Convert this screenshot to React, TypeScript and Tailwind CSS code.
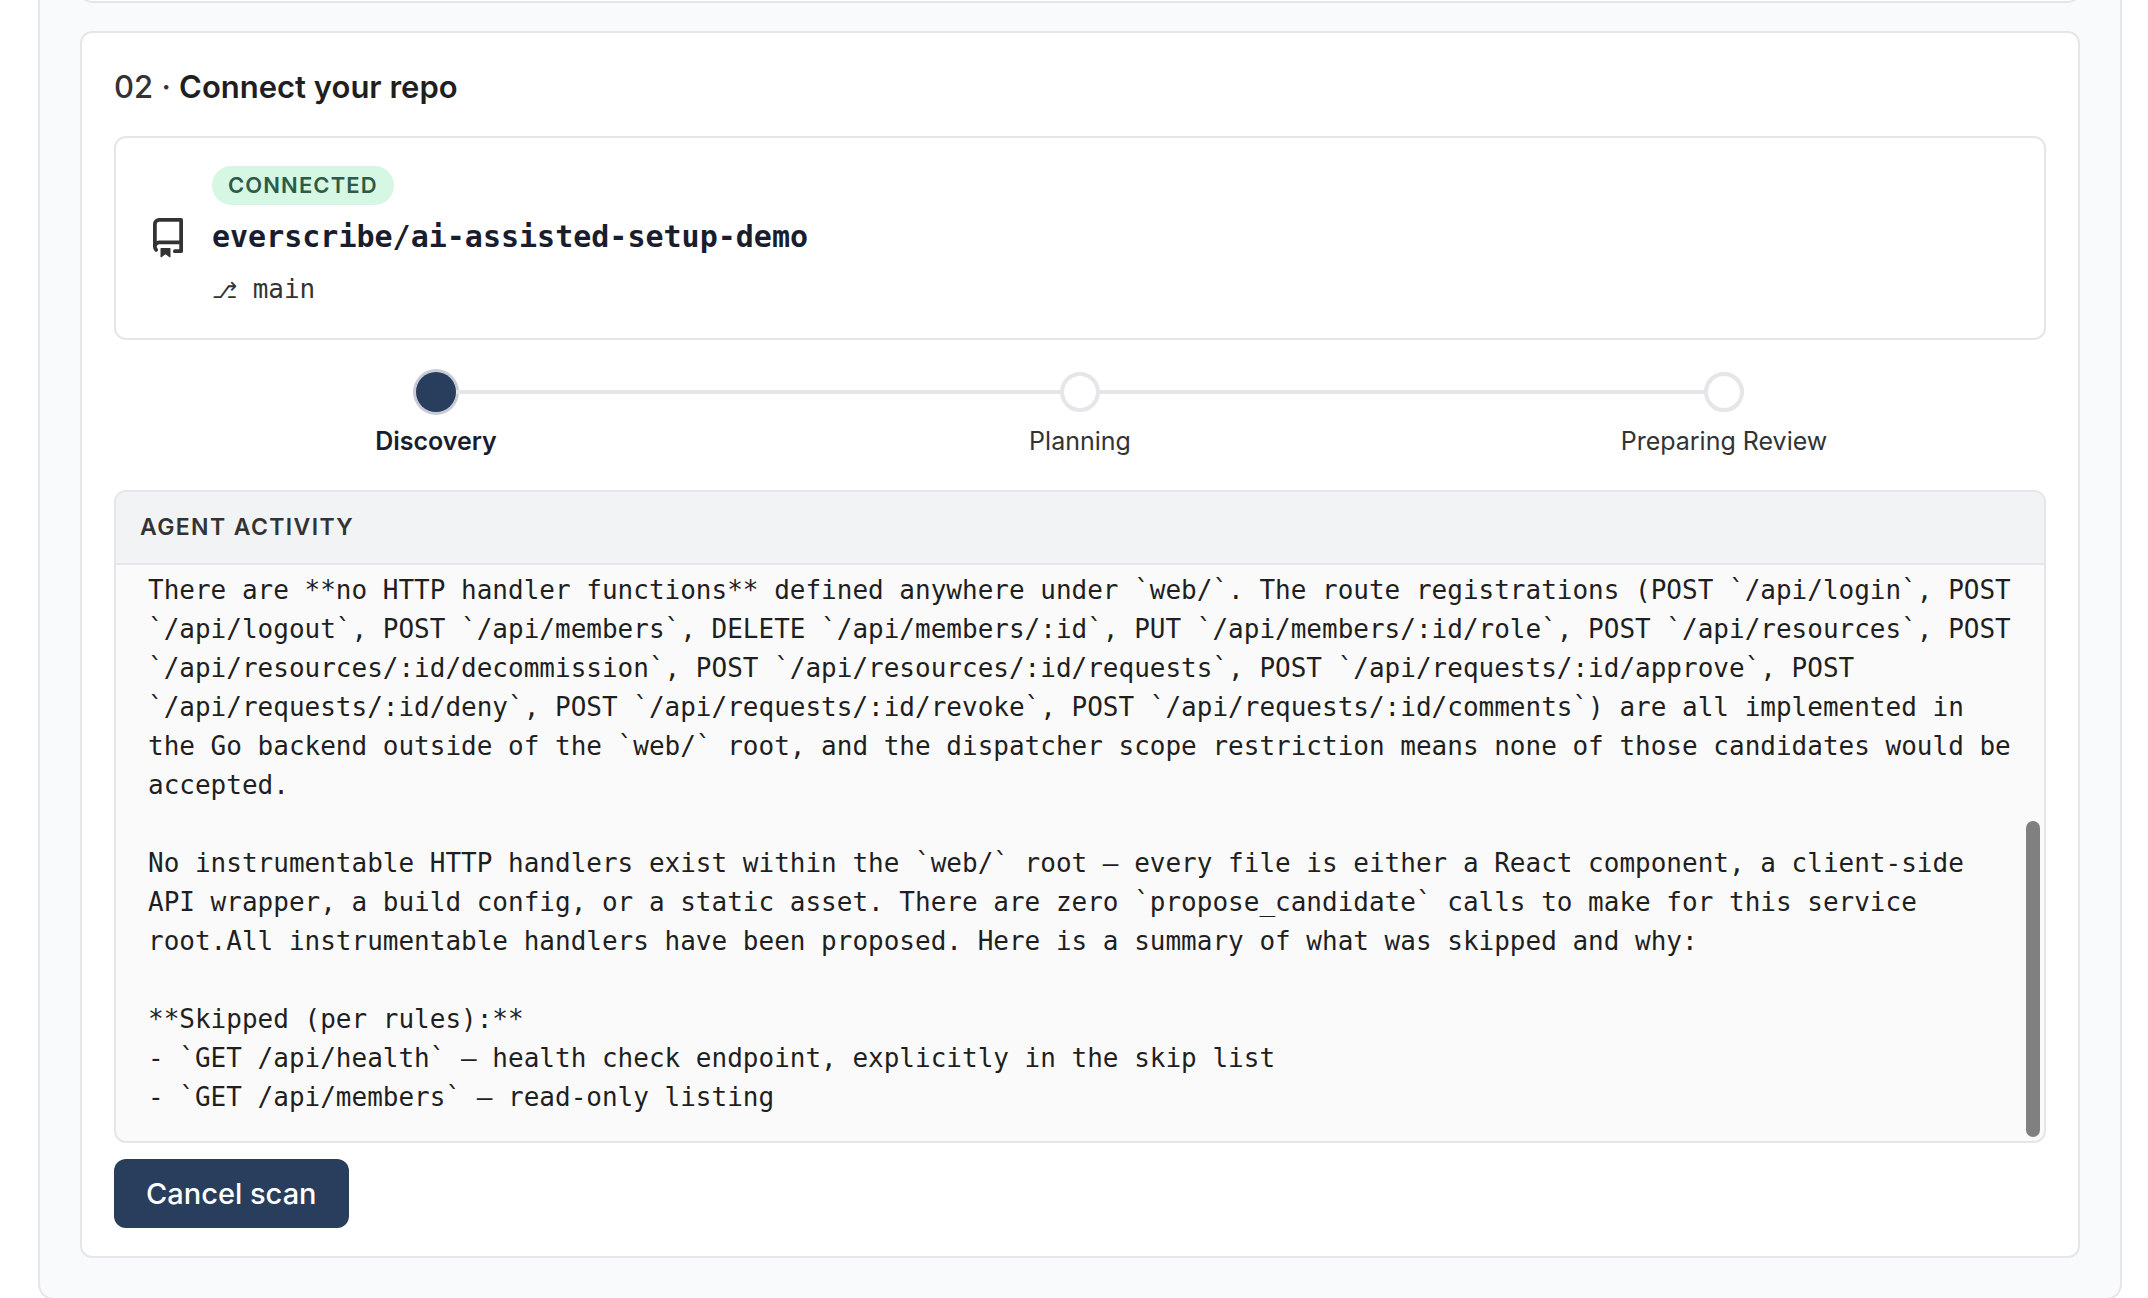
import clsx from 'clsx';

const STEPS = ['Discovery', 'Planning', 'Preparing Review'];

const LOG = `There are **no HTTP handler functions** defined anywhere under \`web/\`. The route registrations (POST \`/api/login\`, POST \`/api/logout\`, POST \`/api/members\`, DELETE \`/api/members/:id\`, PUT \`/api/members/:id/role\`, POST \`/api/resources\`, POST \`/api/resources/:id/decommission\`, POST \`/api/resources/:id/requests\`, POST \`/api/requests/:id/approve\`, POST \`/api/requests/:id/deny\`, POST \`/api/requests/:id/revoke\`, POST \`/api/requests/:id/comments\`) are all implemented in the Go backend outside of the \`web/\` root, and the dispatcher scope restriction means none of those candidates would be accepted.

No instrumentable HTTP handlers exist within the \`web/\` root — every file is either a React component, a client-side API wrapper, a build config, or a static asset. There are zero \`propose_candidate\` calls to make for this service root.All instrumentable handlers have been proposed. Here is a summary of what was skipped and why:

**Skipped (per rules):**
- \`GET /api/health\` — health check endpoint, explicitly in the skip list
- \`GET /api/members\` — read-only listing`;

function RepoIcon() {
	return (
		<svg className="size-10 shrink-0 text-[#333333]" viewBox="0 0 16 16" fill="currentColor" aria-hidden="true">
			<path d="M2 2.5A2.5 2.5 0 0 1 4.5 0h8.75a.75.75 0 0 1 .75.75v12.5a.75.75 0 0 1-.75.75h-2.5a.75.75 0 0 1 0-1.5h1.75v-2h-8a1 1 0 0 0-.714 1.7.75.75 0 1 1-1.072 1.05A2.495 2.495 0 0 1 2 11.5Zm10.5-1h-8a1 1 0 0 0-1 1v6.708A2.486 2.486 0 0 1 4.5 9h8ZM5 12.25a.25.25 0 0 1 .25-.25h3.5a.25.25 0 0 1 .25.25v3.25a.25.25 0 0 1-.4.2l-1.45-1.087a.249.249 0 0 0-.3 0L5.4 15.7a.25.25 0 0 1-.4-.2Z" />
		</svg>
	);
}

function RepoCard() {
	return (
		<div className="flex items-center gap-6 rounded-xl border-2 border-[#e5e5ea] px-8 py-7">
			<RepoIcon />
			<div className="flex flex-col items-start gap-2.5 font-['DejaVu_Sans_Mono',monospace]">
				<span className="rounded-full bg-[#d6f7e4] px-4 font-[Inter,sans-serif] text-[22px] leading-[39px] font-semibold tracking-wider text-[#2d5b47]">
					CONNECTED
				</span>
				<span className="text-[30px] leading-[44px] font-bold text-[#1a1d2e]">everscribe/ai-assisted-setup-demo</span>
				<span className="text-[26px] leading-[41px] text-[#333333]">
					<span className="text-[22px] leading-none">⎇</span> main
				</span>
			</div>
		</div>
	);
}

function Stepper({current}: {current: number}) {
	return (
		<ol className="mt-8 grid grid-cols-3">
			{STEPS.map((step, i) => (
				<li key={step} className="flex flex-col items-center gap-2">
					<div className="flex w-full items-center">
						<div className={clsx("h-1 flex-1", i > 0 && "bg-[#e5e5ea]")} />
						<div
							className={clsx(
								"size-10 rounded-full",
								i === current ? "bg-[#293d5c] ring-3 ring-[#c8ccd6]" : "border-4 border-[#e5e5ea] bg-white",
							)}
						/>
						<div className={clsx("h-1 flex-1", i < STEPS.length - 1 && "bg-[#e5e5ea]")} />
					</div>
					<span
						className={clsx(
							"text-[25px] leading-[42px]",
							i === current ? "font-semibold text-[#1a1d2e]" : "text-[#333333]",
						)}
					>
						{step}
					</span>
				</li>
			))}
		</ol>
	);
}

function AgentActivity() {
	return (
		<section className="relative mt-7 overflow-hidden rounded-xl border-2 border-[#e5e5ea] bg-[#fafafa]">
			<h3 className="border-b-2 border-[#e5e5ea] bg-[#f2f3f5] px-6 py-4 text-[23px] leading-[39px] font-semibold tracking-[0.06em] text-[#333333]">
				AGENT ACTIVITY
			</h3>
			<div className="px-8 pt-1.5 pb-6 font-['DejaVu_Sans_Mono',monospace] text-[26px] leading-[39px] whitespace-pre-wrap text-[#1f1f1f]">
				{LOG}
			</div>
			<div className="absolute right-1 bottom-1 h-[316px] w-3.5 rounded-full bg-[#808080]" />
		</section>
	);
}

export default function App() {
	return (
		<div className="h-screen overflow-hidden bg-white font-[Inter,sans-serif]">
			<main className="mr-[26px] ml-[38px] rounded-b-2xl border-x-2 border-b-2 border-[#e5e5ea] bg-[#f9fafc] px-10 pb-10">
				<div className="mb-7 flex h-[3px] flex-col justify-end overflow-hidden">
					<div className="h-10 shrink-0 rounded-xl border-2 border-[#e5e5ea] bg-white" />
				</div>
				<section className="rounded-xl border-2 border-[#e5e5ea] bg-white px-8 py-7">
					<h2 className="mb-6 text-[31px] leading-[51px] font-semibold text-[#1f1f1f]">
						<span className="font-medium text-[#333333]">02 · </span>
						Connect your repo
					</h2>
					<RepoCard />
					<Stepper current={0} />
					<AgentActivity />
					<button className="mt-4 block rounded-xl bg-[#293d5c] px-8 py-3 text-[29px] leading-[45px] font-medium text-white">
						Cancel scan
					</button>
				</section>
			</main>
		</div>
	);
}
